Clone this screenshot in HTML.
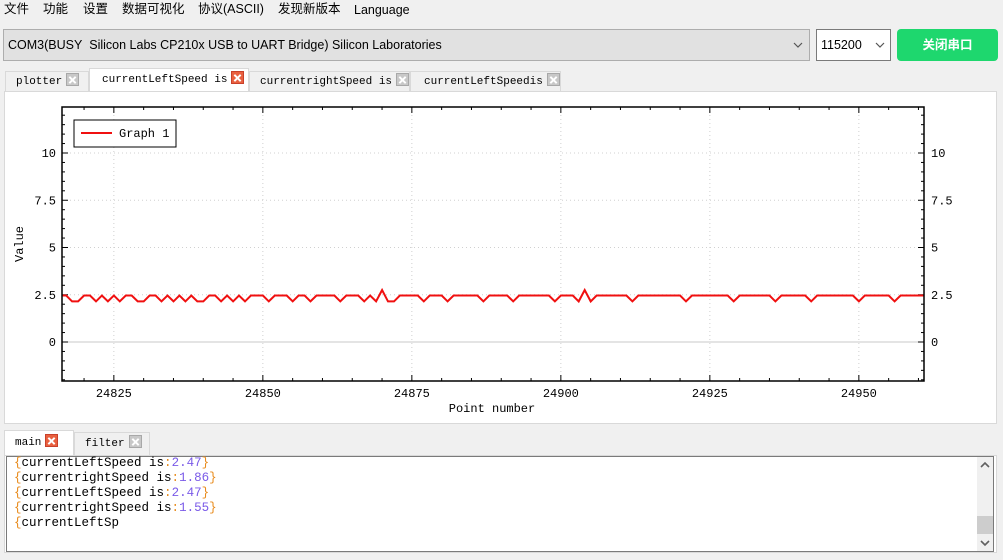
<!DOCTYPE html>
<html><head><meta charset="utf-8">
<style>
*{margin:0;padding:0;box-sizing:border-box}
body{width:1003px;height:560px;background:#f0f0f0;font-family:"Liberation Sans","Noto Sans CJK SC",sans-serif;position:relative;overflow:hidden;font-size:12px;color:#000}
.abs{position:absolute}
.menu span{position:absolute;top:0;height:18px;line-height:18px;font-size:12.5px}
.mono{font-family:"Liberation Mono","Noto Sans CJK SC",monospace}
.tab{position:absolute;border:1px solid #d9d9d9;border-bottom:none;background:#f0f0f0;font-size:11px;padding-left:10px;line-height:20px;font-family:"Liberation Mono",monospace;white-space:nowrap;overflow:hidden}
.tab.act{background:#fff}
.x{display:inline-block;width:13px;height:13px;background:#c8c8c8;border:1px solid #a8a8a8;vertical-align:-2px;margin-left:4px;position:relative}
.x.r{background:#e9603f;border-color:#c9402a}
.x:before,.x:after{content:"";position:absolute;left:1px;top:4.5px;width:9px;height:2px;background:#fff;transform:rotate(45deg)}
.x:after{transform:rotate(-45deg)}
.log{font-size:12.5px;line-height:15px}
.o{color:#e88a1a}.p{color:#7a5ae8}
</style></head><body>
<div class="menu">
<span style="left:4px">文件</span><span style="left:43px">功能</span><span style="left:83px">设置</span><span style="left:122px">数据可视化</span><span style="left:198px">协议(ASCII)</span><span style="left:278px">发现新版本</span><span style="left:354px;top:1px">Language</span>
</div>
<div class="abs" style="left:3px;top:29px;width:807px;height:32px;background:#e1e1e1;border:1px solid #adadad;font-size:12.5px;line-height:30px;padding-left:4px">COM3(BUSY&nbsp; Silicon Labs CP210x USB to UART Bridge) Silicon Laboratories
<svg class="abs" style="right:6px;top:12px" width="10" height="6"><path d="M1 1L5 5L9 1" fill="none" stroke="#555" stroke-width="1.2"/></svg></div>
<div class="abs" style="left:816px;top:29px;width:75px;height:32px;background:#fff;border:1px solid #7a7a7a;font-size:12.5px;line-height:30px;padding-left:4px">115200
<svg class="abs" style="right:5px;top:12px" width="10" height="6"><path d="M1 1L5 5L9 1" fill="none" stroke="#555" stroke-width="1.2"/></svg></div>
<div class="abs" style="left:897px;top:29px;width:101px;height:32px;background:#1ed76e;border-radius:4px;color:#fff;font-size:12.5px;font-weight:bold;text-align:center;line-height:32px">关闭串口</div>

<div class="tab" style="left:5px;top:71px;width:84px;height:21px">plotter<span class="x"></span></div>
<div class="tab act" style="left:89px;top:68px;width:160px;height:24px;line-height:22px;padding-left:12px">currentLeftSpeed is<span class="x r"></span></div>
<div class="tab" style="left:249px;top:71px;width:161px;height:21px">currentrightSpeed is<span class="x"></span></div>
<div class="tab" style="left:410px;top:71px;width:151px;height:21px;padding-left:13px">currentLeftSpeedis<span class="x"></span></div>
<div class="abs" style="left:4px;top:91px;width:993px;height:333px;background:#fff;border:1px solid #d9d9d9"></div>
<svg id="plot" class="abs" style="left:0;top:0" width="1003" height="430"></svg>

<div class="tab act" style="left:4px;top:430px;width:70px;height:26px;line-height:24px">main<span class="x r"></span></div>
<div class="tab" style="left:74px;top:432px;width:76px;height:24px;line-height:22px">filter<span class="x"></span></div>
<div class="abs" style="left:4px;top:455px;width:993px;height:98px;background:#fff;border:1px solid #d9d9d9"></div>
<div class="abs" style="left:6px;top:456px;width:988px;height:96px;border:1px solid #7a7a7a;background:#fff"></div>
<div class="abs log mono" style="left:14px;top:456px">
<div><span class="o">{</span>currentLeftSpeed is<span class="o">:</span><span class="p">2.47</span><span class="o">}</span></div>
<div><span class="o">{</span>currentrightSpeed is<span class="o">:</span><span class="p">1.86</span><span class="o">}</span></div>
<div><span class="o">{</span>currentLeftSpeed is<span class="o">:</span><span class="p">2.47</span><span class="o">}</span></div>
<div><span class="o">{</span>currentrightSpeed is<span class="o">:</span><span class="p">1.55</span><span class="o">}</span></div>
<div><span class="o">{</span>currentLeftSp</div>
</div>
<div class="abs" style="left:977px;top:457px;width:16px;height:94px;background:#f0f0f0"></div>
<div class="abs" style="left:977px;top:516px;width:16px;height:18px;background:#cdcdcd"></div>
<svg class="abs" style="left:980px;top:461px" width="10" height="8"><path d="M1 6L5 2L9 6" fill="none" stroke="#606060" stroke-width="1.6"/></svg>
<svg class="abs" style="left:980px;top:539px" width="10" height="8"><path d="M1 2L5 6L9 2" fill="none" stroke="#606060" stroke-width="1.6"/></svg>

<script>
var s=document.getElementById('plot'),h='';
var L=62,R=924,T=107,B=381;
function X(v){return L+(v-24816.3)*5.96}
function Y(v){return 342-v*18.9}
var F='font-family="Liberation Mono,monospace" font-size="12"';
[24825,24850,24875,24900,24925,24950].forEach(function(v){var x=X(v);h+='<line x1="'+x+'" y1="'+T+'" x2="'+x+'" y2="'+B+'" stroke="#d0d0d0" stroke-dasharray="1,3"/>';h+='<text x="'+x+'" y="397" text-anchor="middle" '+F+'>'+v+'</text>'});
[2.5,5,7.5,10].forEach(function(v){var y=Y(v);h+='<line x1="'+L+'" y1="'+y+'" x2="'+R+'" y2="'+y+'" stroke="#d0d0d0" stroke-dasharray="1,3"/>'});
h+='<line x1="'+L+'" y1="342" x2="'+R+'" y2="342" stroke="#c8c8c8"/>';
[0,2.5,5,7.5,10].forEach(function(v){var y=Y(v);h+='<text x="56" y="'+(y+4)+'" text-anchor="end" '+F+'>'+v+'</text><text x="931" y="'+(y+4)+'" '+F+'>'+v+'</text>'});
for(var v=-2;v<=12;v+=0.5){var y=Y(v);if(y<T||y>B)continue;var M=(v%2.5==0)?6:3;h+='<line x1="'+L+'" y1="'+y+'" x2="'+(L+M)+'" y2="'+y+'" stroke="#000"/><line x1="'+R+'" y1="'+y+'" x2="'+(R-M)+'" y2="'+y+'" stroke="#000"/>'}
for(var v=24820;v<=24960;v+=5){var x=X(v);if(x<L||x>R)continue;var M=(v%25==0)?6:3;h+='<line x1="'+x+'" y1="'+B+'" x2="'+x+'" y2="'+(B-M)+'" stroke="#000"/><line x1="'+x+'" y1="'+T+'" x2="'+x+'" y2="'+(T+M)+'" stroke="#000"/>'}
var pat="HHLLHHLHLHLHHLLHHLHLHLHLLHHLHLHLHHHLHHHLHHLHHHHLHHHLHHHHLHHHHLHHHLHHHHHLHHHHLHHHHHHLHHHHHLHHHHHHLHHHHHHHHLHHHHHHHLHHHHHHLHHHHHLHHHHHHHLHHHHHLHHHHHHHLHHHHLHHHLHHHH".split('');
pat[54]='S';pat[53]='L';pat[55]='L';pat[88]='S';pat[87]='L';pat[89]='L';
var pts=[],i=0;
for(var v=24816;v<=24962;v++,i++){var c=pat[i]||'H';var val=c=='H'?2.46:c=='L'?2.15:2.75;var x=Math.max(L,Math.min(R,X(v)));pts.push(x.toFixed(1)+','+Y(val).toFixed(1))}
h+='<polyline points="'+pts.join(' ')+'" fill="none" stroke="#f01010" stroke-width="2"/>';
h+='<rect x="'+L+'" y="'+T+'" width="'+(R-L)+'" height="'+(B-T)+'" fill="none" stroke="#000" stroke-width="1.5"/>';
h+='<rect x="74" y="120" width="102" height="27" fill="#fff" stroke="#000"/><line x1="81" y1="133" x2="112" y2="133" stroke="#f01010" stroke-width="2"/><text x="119" y="137" '+F+'>Graph 1</text>';
h+='<text x="492" y="412" text-anchor="middle" '+F+'>Point number</text>';
h+='<text transform="translate(23,244) rotate(-90)" text-anchor="middle" '+F+'>Value</text>';
s.innerHTML=h;
</script>
</body></html>
